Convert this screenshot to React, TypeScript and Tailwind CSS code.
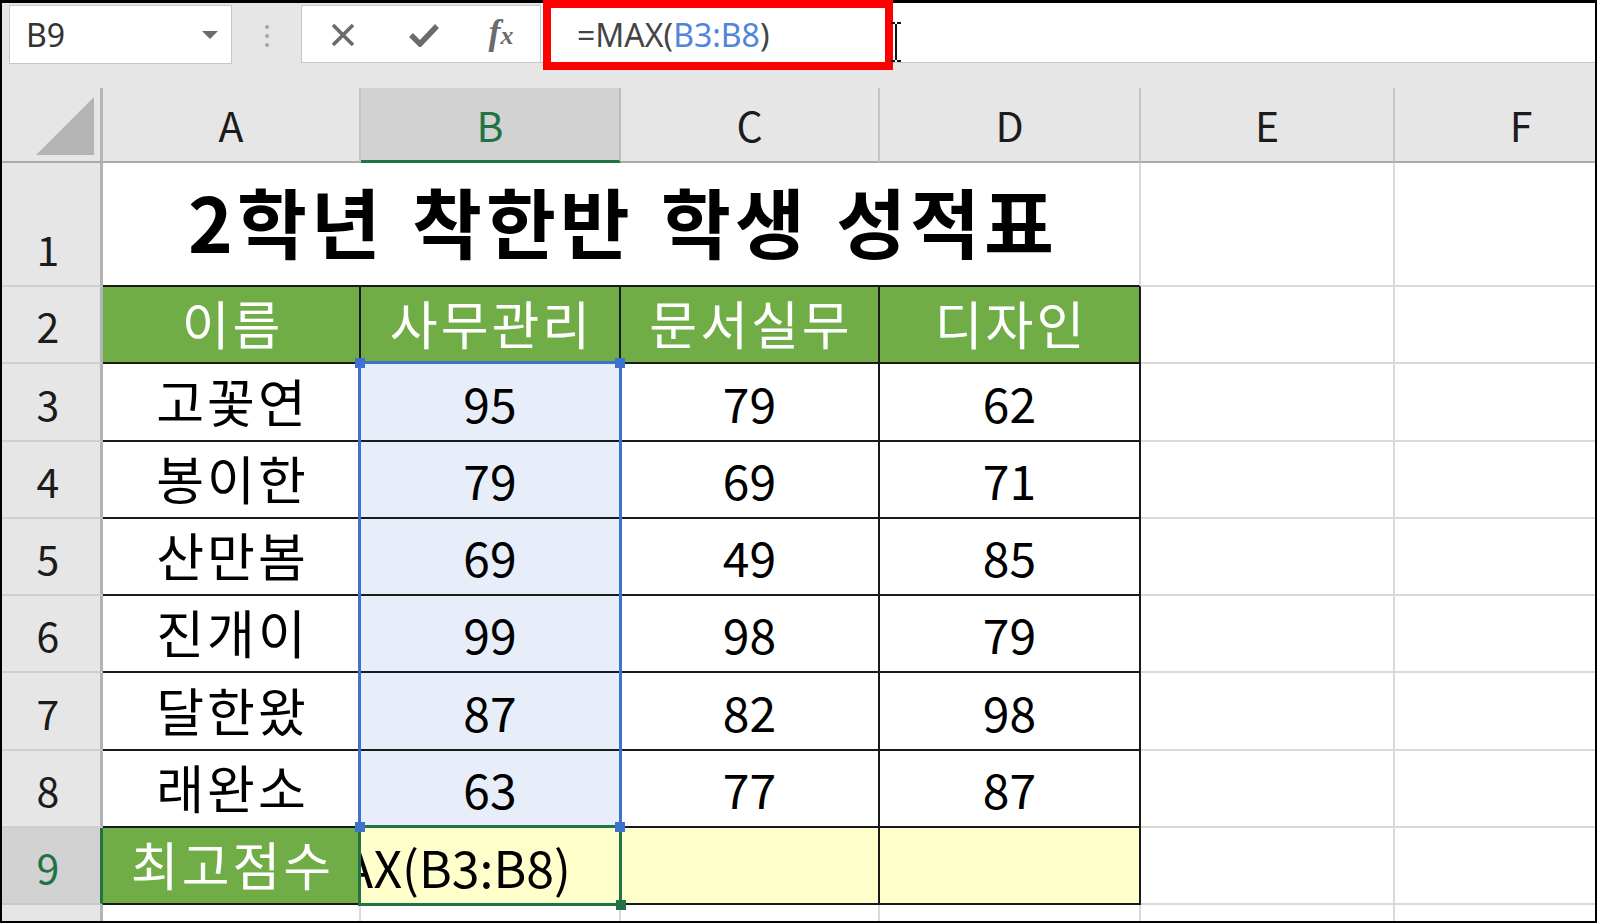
import { type FC, type ReactNode } from "react";

const rows: [string, number, number, number][] = [
  ["고꽃연", 95, 79, 62],
  ["봉이한", 79, 69, 71],
  ["산만봄", 69, 49, 85],
  ["진개이", 99, 98, 79],
  ["달한왔", 87, 82, 98],
  ["래완소", 63, 77, 87],
];

const ColHeader: FC<{ label: string; selected?: boolean }> = ({ label, selected }) =>
  selected ? (
    <div className="flex items-center justify-center border-r-2 border-b-[3px] border-r-[#bdbdbd] border-b-[#217346] bg-[#d2d2d2]">
      <span className="text-[41px] leading-none text-[#217346]">{label}</span>
    </div>
  ) : (
    <div className="flex items-center justify-center border-r-2 border-b-2 border-r-[#c4c4c4] border-b-[#ababab] bg-[#e6e6e6]">
      <span className="text-[41px] leading-none text-[#1b1b1b]">{label}</span>
    </div>
  );

const RowHeader: FC<{ n?: number; selected?: boolean }> = ({ n, selected }) =>
  selected ? (
    <div className="flex items-end justify-center border-r-[3px] border-b-2 border-r-[#217346] border-b-[#c8c8c8] bg-[#d2d2d2] pr-[6px] pb-[16px]">
      <span className="text-[41px] leading-none text-[#217346]">{n}</span>
    </div>
  ) : (
    <div className="flex items-end justify-center border-r-[3px] border-b-2 border-r-[#b4b4b4] border-b-[#cfcfcf] bg-[#e6e6e6] pr-[6px] pb-[16px]">
      <span className="text-[41px] leading-none text-[#1b1b1b]">{n}</span>
    </div>
  );

// empty sheet cell with light gridlines
const Blank: FC = () => <div className="border-r-2 border-b-2 border-[#dadada] bg-white" />;

// bordered table cell (black lines)
const Cell: FC<{ children?: ReactNode; tone?: "white" | "green" | "blue" | "yellow" }> = ({
  children,
  tone = "white",
}) => {
  const bg =
    tone === "green"
      ? "bg-[#70ad47] text-white"
      : tone === "blue"
        ? "bg-[#e8eef9] text-black"
        : tone === "yellow"
          ? "bg-[#ffffcc] text-black"
          : "bg-white text-black";
  const isText = typeof children === "string";
  return (
    <div className={`flex items-end justify-center border-r-2 border-b-2 border-[#1a1a1a] pb-[13px] ${bg}`}>
      {isText ? (
        <span className="pl-[3px] text-[52px] leading-none tracking-[3px]">{children}</span>
      ) : (
        <span className="pb-[1px] text-[48px] leading-none">{children}</span>
      )}
    </div>
  );
};

const Handle: FC<{ className: string }> = ({ className }) => (
  <div className={`absolute h-[10px] w-[10px] ${className}`} />
);

export default function App() {
  return (
    <div className="relative h-[923px] w-[1597px] overflow-hidden bg-white font-['Noto_Sans','Noto_Sans_CJK_KR',sans-serif]">
      <div className="flex h-full flex-col overflow-hidden border-x-2 border-t-[3px] border-b-2 border-black">
        {/* formula bar */}
        <div className="flex h-[85px] shrink-0 items-start bg-[#e6e6e6] pt-[2px]">
          <div className="ml-[7px] flex h-[59px] w-[223px] items-center justify-between border border-[#c6c6c6] bg-white pl-[16px] pr-[13px]">
            <span className="text-[32px] leading-none text-[#333]">B9</span>
            <svg width="16" height="8" viewBox="0 0 16 8">
              <path d="M0 0h16L8 8z" fill="#6b6b6b" />
            </svg>
          </div>
          <div className="flex h-[59px] w-[69px] flex-col items-center justify-center gap-[5px] pt-[2px]">
            <span className="h-[4px] w-[4px] rounded-full bg-[#a6a6a6]" />
            <span className="h-[4px] w-[4px] rounded-full bg-[#a6a6a6]" />
            <span className="h-[4px] w-[4px] rounded-full bg-[#a6a6a6]" />
          </div>
          <div className="flex h-[58px] w-[240px] items-center border border-[#c6c6c6] bg-white">
            <div className="flex w-[82px] justify-center pt-[1px]">
              <svg width="26" height="22" viewBox="0 0 26 22">
                <path d="M3 1l20 20M23 1L3 21" stroke="#6b6b6b" strokeWidth="3.6" />
              </svg>
            </div>
            <div className="flex w-[80px] justify-center pt-[2px]">
              <svg width="30" height="24" viewBox="0 0 30 24">
                <path d="M2 12l9 9L28 3" stroke="#6b6b6b" strokeWidth="5.5" fill="none" />
              </svg>
            </div>
            <div className="flex w-[74px] justify-center pb-[4px]">
              <span className="font-['Liberation_Serif',serif] text-[36px] font-bold italic leading-none text-[#6b6b6b]">
                f<span className="text-[26px]">x</span>
              </span>
            </div>
          </div>
          <div className="-mt-[2px] flex h-[60px] flex-1 items-center border-b border-[#c6c6c6] bg-white pl-[36px] pt-[4px]">
            <span className="text-[32px] leading-none text-[#444]">
              =MAX(<span className="text-[#4f86d8]">B3:B8</span>)
            </span>
          </div>
        </div>

        {/* sheet */}
        <div className="relative grid flex-1 grid-cols-[101px_258px_260px_259px_261px_254px_254px] grid-rows-[75px_124px_repeat(8,77.25px)_1fr] bg-white font-['Noto_Sans_CJK_KR',sans-serif]">
          <div className="relative border-r-[3px] border-b-2 border-r-[#b4b4b4] border-b-[#ababab] bg-[#e6e6e6]">
            <svg className="absolute right-[6px] bottom-[6px]" width="58" height="58" viewBox="0 0 58 58">
              <path d="M58 0V58H0z" fill="#b4b4b4" />
            </svg>
          </div>
          <ColHeader label="A" />
          <ColHeader label="B" selected />
          <ColHeader label="C" />
          <ColHeader label="D" />
          <ColHeader label="E" />
          <ColHeader label="F" />

          <RowHeader n={1} />
          <div className="col-span-4 flex items-end justify-center border-r-2 border-b-2 border-r-[#dadada] border-b-[#1a1a1a] pb-[27px]">
            <span className="pl-[4px] text-[76px] font-bold leading-none tracking-[4px] text-black [word-spacing:6px]">
              2학년 착한반 학생 성적표
            </span>
          </div>
          <Blank />
          <Blank />

          <RowHeader n={2} />
          <Cell tone="green">이름</Cell>
          <Cell tone="green">사무관리</Cell>
          <Cell tone="green">문서실무</Cell>
          <Cell tone="green">디자인</Cell>
          <Blank />
          <Blank />

          {rows.map(([name, b, c, d], i) => (
            <div key={name} className="contents">
              <RowHeader n={i + 3} />
              <Cell>{name}</Cell>
              <Cell tone="blue">{b}</Cell>
              <Cell>{c}</Cell>
              <Cell>{d}</Cell>
              <Blank />
              <Blank />
            </div>
          ))}

          <RowHeader n={9} selected />
          <Cell tone="green">최고점수</Cell>
          <div className="flex items-end justify-end overflow-hidden border-r-2 border-b-2 border-[#1a1a1a] bg-[#ffffcc] pr-[48px] pb-[12px]">
            <span className="whitespace-nowrap text-[50px] leading-none text-black">=MAX(B3:B8)</span>
          </div>
          <Cell tone="yellow" />
          <Cell tone="yellow" />
          <Blank />
          <Blank />

          <div className="border-r-[3px] border-r-[#b4b4b4] bg-[#e6e6e6]" />
          <div className="border-r-2 border-[#dadada]" />
          <div className="border-r-2 border-[#dadada]" />
          <div className="border-r-2 border-[#dadada]" />
          <div className="border-r-2 border-[#dadada]" />
          <div className="border-r-2 border-[#dadada]" />
          <div />

          {/* range reference highlight B3:B8 */}
          <div className="pointer-events-none absolute left-[356px] top-[273px] h-[467px] w-[264px] border-[3px] border-[#3f72cf]" />
          <Handle className="left-[353px] top-[270px] bg-[#3f72cf]" />
          <Handle className="left-[613px] top-[270px] bg-[#3f72cf]" />
          {/* active cell B9 */}
          <div className="pointer-events-none absolute left-[356px] top-[737px] h-[81px] w-[264px] border-[3px] border-[#217346]" />
          <Handle className="left-[353px] top-[734px] bg-[#3f72cf]" />
          <Handle className="left-[613px] top-[734px] bg-[#3f72cf]" />
          <Handle className="left-[614px] top-[812px] h-[9px] w-[9px] bg-[#217346]" />
        </div>
      </div>

      {/* annotation box */}
      <div className="pointer-events-none absolute left-[543px] top-0 h-[70px] w-[350px] border-[8px] border-[#ff0000]" />
      {/* text cursor */}
      <svg className="absolute left-[890px] top-[22px]" width="12" height="40" viewBox="0 0 12 40">
        <path d="M1 1h4M7 1h4M6 2v36M1 39h4M7 39h4" stroke="#111" strokeWidth="2" />
      </svg>
    </div>
  );
}
